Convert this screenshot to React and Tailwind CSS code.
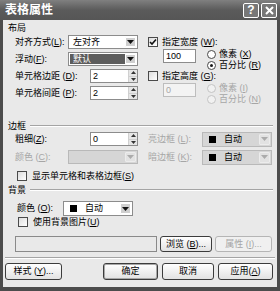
import React from 'react';

function Tri({ up = false, big = false, c = '#000' }) {
  if (big) {
    return (
      <svg width="7" height="4" viewBox="0 0 7 4">
        <path d="M0 0H7L3.5 4Z" fill={c} />
      </svg>
    );
  }
  return (
    <svg width="5" height="3" viewBox="0 0 5 3">
      <path d={up ? 'M0 3L2.5 0L5 3Z' : 'M0 0H5L2.5 3Z'} fill={c} />
    </svg>
  );
}

function Lbl({ t, k, colon = true, dis = false, dots = false }) {
  return (
    <span className={`whitespace-nowrap ${dis ? 'text-[#a6a6a6]' : ''}`}>
      {t}(<span className="underline underline-offset-1">{k}</span>){colon ? ':' : ''}
      {dots ? '...' : ''}
    </span>
  );
}

function Check({ on = false }) {
  return (
    <span className="w-[10px] h-[10px] shrink-0 border border-[#4a4a4a] bg-linear-to-br from-[#dcdcdc] to-white flex items-center justify-center">
      {on && (
        <svg width="8" height="8" viewBox="0 0 8 8">
          <path d="M1 4l2 2 4-4.5" stroke="#111" strokeWidth="1.6" fill="none" />
        </svg>
      )}
    </span>
  );
}

function Radio({ on = false, dis = false }) {
  return (
    <span
      className={`w-[9px] h-[9px] shrink-0 rounded-full border flex items-center justify-center ${
        dis ? 'border-[#c4c4c4] bg-[#f1f1f1]' : 'border-[#4a4a4a] bg-white'
      }`}
    >
      {on && <span className="w-[3px] h-[3px] rounded-full bg-[#1a1a1a]" />}
    </span>
  );
}

function Select({ children, cls, dis = false, hl = false }) {
  return (
    <div
      className={`${cls} flex border p-px ${
        dis ? 'border-[#b9b9b9] bg-[#d6d6d6]' : 'border-[#8c8c8c] bg-white'
      }`}
    >
      <div className={`flex-1 flex items-center pl-[3px] ${hl ? 'bg-[#5d5d5d] text-white' : ''}`}>
        {children}
      </div>
      <div
        className={`w-[11px] flex items-center justify-center rounded-[1px] border ${
          dis ? 'border-[#ececec] bg-[#e2e2e2]' : 'border-white bg-[#cfcfcf]'
        }`}
      >
        <Tri big c={dis ? '#ababab' : '#111'} />
      </div>
    </div>
  );
}

function Swatch({ children }) {
  return (
    <span className="flex items-center">
      <span className="w-[7px] h-[7px] bg-black ml-[2px] mr-[8px]" />
      {children}
    </span>
  );
}

function Spin({ v }) {
  return (
    <div className="w-[48px] h-[14px] flex border border-[#8c8c8c] bg-white">
      <span className="flex-1 pl-[2px] flex items-center">{v}</span>
      <div className="w-[9px] flex flex-col bg-[#e6e6e6] border-l border-[#d0d0d0]">
        <div className="flex-1 flex items-center justify-center border-b border-[#d0d0d0]">
          <Tri up c="#333" />
        </div>
        <div className="flex-1 flex items-center justify-center">
          <Tri c="#333" />
        </div>
      </div>
    </div>
  );
}

function Btn({ children, cls, dis = false, def = false }) {
  return (
    <div
      className={`${cls} flex items-center justify-center rounded-[3px] border ${
        dis
          ? 'border-[#b5b5b5] text-[#a8a8a8] bg-[#f0f0f0]'
          : 'border-[#3c3c3c] bg-linear-to-b from-white to-[#e2e2e2]'
      } ${def ? 'shadow-[inset_0_0_0_1px_#a8a8a8]' : ''}`}
    >
      {children}
    </div>
  );
}

function Section({ children }) {
  return (
    <div className="h-[12px] flex items-center gap-[4px]">
      <span>{children}</span>
      <div className="flex-1 h-[2px] border-t border-[#a4a4a4] border-b border-b-white" />
    </div>
  );
}

function TitleBtn({ children }) {
  return (
    <div className="w-[16px] h-[15px] rounded-[2px] border border-white bg-[#777] flex items-center justify-center text-white font-bold text-[12px]">
      {children}
    </div>
  );
}

export default function App() {
  return (
    <div className="w-[280px] h-[291px] flex flex-col bg-[#4c4c4c] font-['Liberation_Sans','Noto_Sans_CJK_SC',sans-serif] text-[9px] leading-none text-black overflow-hidden">
      <div className="h-[20px] shrink-0 flex items-center pl-[5px] pr-[3px] bg-linear-to-b from-[#808080] via-[#5b5b5b] to-[#565656]">
        <span className="text-white font-bold text-[12px]">表格属性</span>
        <div className="ml-auto flex gap-[2px]">
          <TitleBtn>?</TitleBtn>
          <TitleBtn>
            <svg width="9" height="9" viewBox="0 0 9 9">
              <path d="M1 1L8 8M8 1L1 8" stroke="#fff" strokeWidth="2" />
            </svg>
          </TitleBtn>
        </div>
      </div>

      <div className="mx-[3px] mb-[4px] flex-1 bg-[#e9e9e9] flex flex-col pt-[2px]">
        <div className="flex flex-col pl-[5px] pr-[4px]">
          <div className="h-[12px] flex items-center">布局</div>

          <div className="flex pl-[7px] mt-[1px]">
            <div className="w-[123px] flex flex-col gap-[3px]">
              <div className="h-[14px] flex items-center justify-between">
                <Lbl t="对齐方式" k="L" />
                <Select cls="w-[70px] h-[14px]">左对齐</Select>
              </div>
              <div className="h-[14px] flex items-center justify-between">
                <Lbl t="浮动" k="F" />
                <Select cls="w-[70px] h-[14px]" hl>
                  默认
                </Select>
              </div>
              <div className="h-[14px] flex items-center justify-between">
                <Lbl t="单元格边距 " k="D" />
                <Spin v="2" />
              </div>
              <div className="h-[14px] flex items-center justify-between">
                <Lbl t="单元格间距 " k="P" />
                <Spin v="2" />
              </div>
            </div>

            <div className="w-[124px] ml-[10px] flex flex-col">
              <div className="h-[14px] flex items-center gap-[4px]">
                <Check on />
                <Lbl t="指定宽度 " k="W" />
              </div>
              <div className="flex">
                <div className="ml-[15px] w-[33px] h-[14px] border border-[#8c8c8c] bg-white flex items-center pl-[2px]">
                  100
                </div>
                <div className="ml-[11px] flex flex-col">
                  <div className="h-[11px] flex items-center gap-[3px]">
                    <Radio />
                    <Lbl t="像素 " k="X" colon={false} />
                  </div>
                  <div className="h-[11px] flex items-center gap-[3px]">
                    <Radio on />
                    <Lbl t="百分比 " k="R" colon={false} />
                  </div>
                </div>
              </div>
              <div className="h-[10px] flex items-center gap-[4px]">
                <Check />
                <Lbl t="指定高度 " k="G" />
              </div>
              <div className="flex mt-[2px]">
                <div className="ml-[15px] w-[33px] h-[14px] border border-[#bdbdbd] bg-[#f3f3f3] text-[#a6a6a6] flex items-center pl-[2px]">
                  0
                </div>
                <div className="ml-[11px] flex flex-col">
                  <div className="h-[11px] flex items-center gap-[3px]">
                    <Radio dis />
                    <Lbl t="像素 " k="I" colon={false} dis />
                  </div>
                  <div className="h-[11px] flex items-center gap-[3px]">
                    <Radio dis />
                    <Lbl t="百分比 " k="N" colon={false} dis />
                  </div>
                </div>
              </div>
            </div>
          </div>

          <div className="mt-[15px]">
            <Section>边框</Section>
          </div>

          <div className="flex pl-[7px]">
            <div className="w-[123px] flex flex-col gap-[4px]">
              <div className="h-[14px] flex items-center justify-between">
                <Lbl t="粗细" k="Z" />
                <Spin v="0" />
              </div>
              <div className="h-[14px] flex items-center justify-between">
                <Lbl t="颜色 " k="C" dis />
                <Select cls="w-[70px] h-[14px]" dis />
              </div>
            </div>
            <div className="w-[124px] ml-[10px] flex flex-col gap-[4px]">
              <div className="h-[14px] flex items-center justify-between">
                <Lbl t="亮边框 " k="L" dis />
                <Select cls="w-[70px] h-[15px]" dis>
                  <Swatch>自动</Swatch>
                </Select>
              </div>
              <div className="h-[14px] flex items-center justify-between">
                <Lbl t="暗边框 " k="K" dis />
                <Select cls="w-[70px] h-[15px]" dis>
                  <Swatch>自动</Swatch>
                </Select>
              </div>
            </div>
          </div>

          <div className="mt-[6px] h-[12px] pl-[9px] flex items-center gap-[5px]">
            <Check />
            <Lbl t="显示单元格和表格边框" k="S" colon={false} />
          </div>

          <div className="mt-[2px]">
            <Section>背景</Section>
          </div>

          <div className="mt-[5px] pl-[9px] flex items-center">
            <span className="w-[46px]">
              <Lbl t="颜色 " k="O" />
            </span>
            <Select cls="w-[70px] h-[15px]">
              <Swatch>自动</Swatch>
            </Select>
          </div>

          <div className="h-[12px] pl-[10px] flex items-center gap-[5px]">
            <Check />
            <Lbl t="使用背景图片" k="U" colon={false} />
          </div>

          <div className="mt-[8px] pl-[7px] flex gap-[3px]">
            <div className="w-[142px] h-[16px] border border-[#8a8a8a]" />
            <Btn cls="w-[52px] h-[16px]">
              <Lbl t="浏览 " k="B" colon={false} dots />
            </Btn>
            <Btn cls="w-[57px] h-[16px]" dis>
              <Lbl t="属性 " k="I" colon={false} dots dis />
            </Btn>
          </div>
        </div>

        <div className="mt-[5px] mx-[2px] h-[2px] border-t border-[#a4a4a4] border-b border-b-white" />

        <div className="mt-[4px] pl-[2px] pr-[4px] flex items-center">
          <Btn cls="w-[57px] h-[17px]">
            <Lbl t="样式 " k="Y" colon={false} dots />
          </Btn>
          <div className="ml-auto flex gap-[4px]">
            <Btn cls="w-[55px] h-[17px]" def>
              确定
            </Btn>
            <Btn cls="w-[52px] h-[17px]">取消</Btn>
            <Btn cls="w-[55px] h-[17px]">
              <Lbl t="应用" k="A" colon={false} />
            </Btn>
          </div>
        </div>
      </div>
    </div>
  );
}
